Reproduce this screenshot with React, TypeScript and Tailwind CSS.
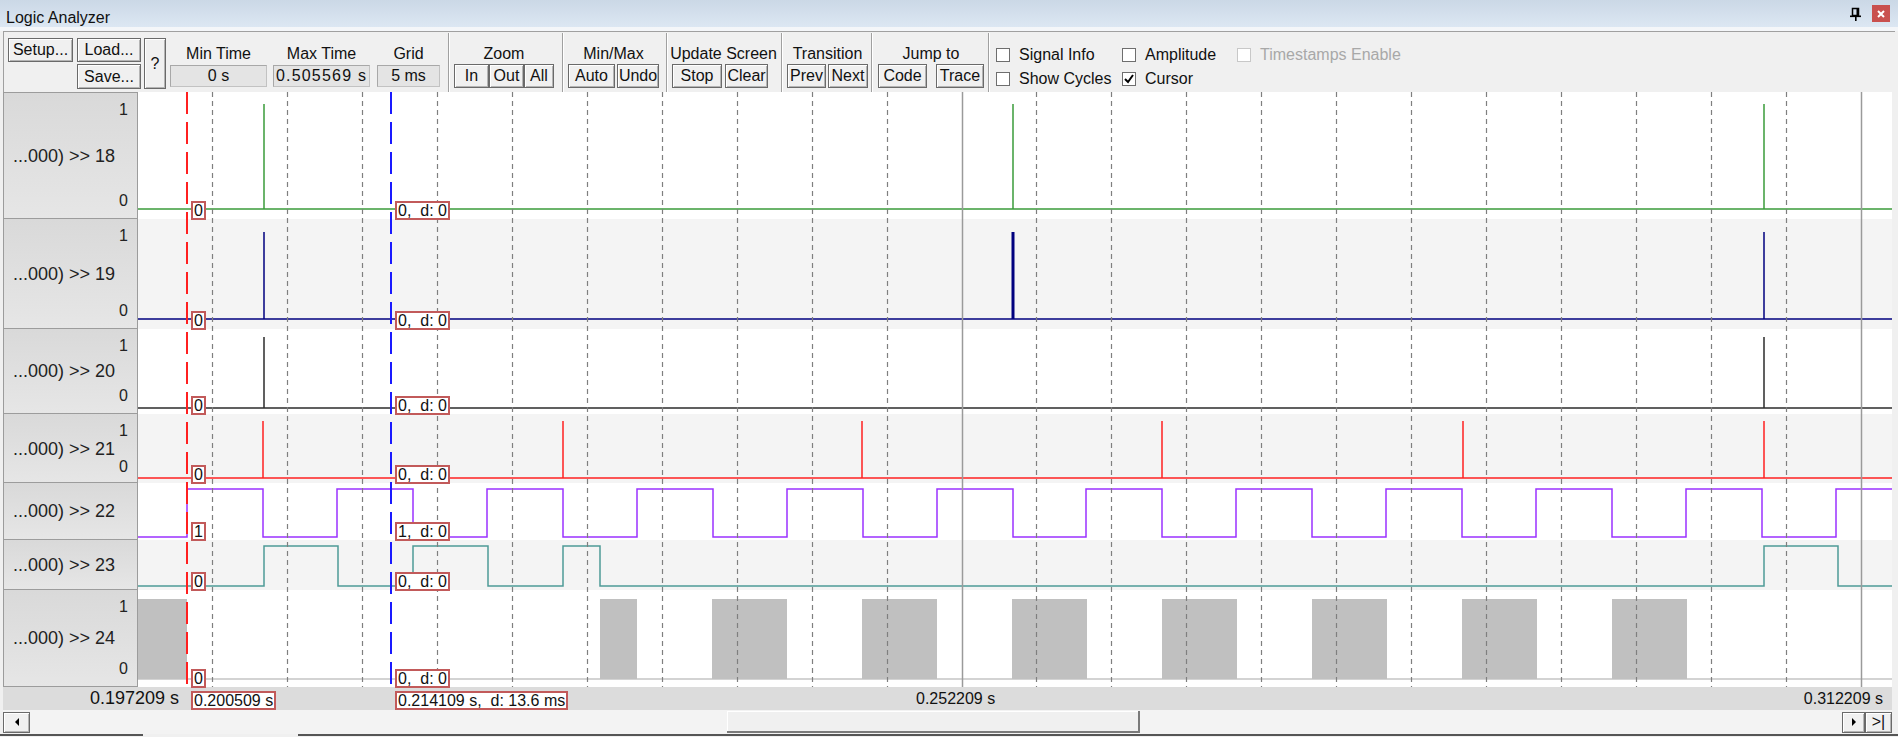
import React from "react";

// plot area is 1754px wide, x = 0 at 0.197209 s
const W = 1754;

function stepPath(start: 0 | 1, xs: number[], hi: number, lo: number) {
  let level = start;
  let d = `M0 ${level ? hi : lo}`;
  for (const x of xs) {
    level = level ? 0 : 1;
    d += ` H${x} V${level ? hi : lo}`;
  }
  return d + ` H${W}`;
}

const purpleXs: number[] = [];
for (let k = 0; k < 12; k++) {
  const r = Math.round(49 + 149.9 * k);
  const f = Math.round(125 + 149.9 * k);
  if (r < W) purpleXs.push(r);
  if (f < W) purpleXs.push(f);
}

const blocks = [
  [0, 49], [462, 499], [574, 649], [724, 799], [874, 949],
  [1024, 1099], [1174, 1249], [1324, 1399], [1474, 1549],
];

type Row = {
  name: string;
  h: number;
  stripe: boolean;
  levels: boolean;
  val: string;
  wave: React.ReactNode;
};

function spikes(xs: number[], top: number, base: number, color: string, thick?: number) {
  return (
    <>
      <line x1={0} x2={W} y1={base} y2={base} stroke={color} strokeWidth={1.5} />
      {xs.map((x) => (
        <line key={x} x1={x} x2={x} y1={top} y2={base} stroke={color} strokeWidth={x === thick ? 3 : 1.5} />
      ))}
    </>
  );
}

const rows: Row[] = [
  { name: "...000) >> 18", h: 127, stripe: false, levels: true, val: "0", wave: spikes([126, 875, 1626], 12, 117, "#3a9b3a") },
  { name: "...000) >> 19", h: 110, stripe: true, levels: true, val: "0", wave: spikes([126, 875, 1626], 13, 100, "#00007f", 875) },
  { name: "...000) >> 20", h: 85, stripe: false, levels: true, val: "0", wave: spikes([126, 1626], 8, 79, "#2b2b2b") },
  { name: "...000) >> 21", h: 69, stripe: true, levels: true, val: "0", wave: spikes([125, 425, 724, 1024, 1325, 1626], 7, 64, "#ff2020") },
  {
    name: "...000) >> 22", h: 57, stripe: false, levels: false, val: "1",
    wave: <path d={stepPath(0, purpleXs, 6, 54)} fill="none" stroke="#9a32ff" strokeWidth={1.5} />,
  },
  {
    name: "...000) >> 23", h: 50, stripe: true, levels: false, val: "0",
    wave: <path d={stepPath(0, [126, 200, 275, 350, 425, 462, 1626, 1700], 6, 46)} fill="none" stroke="#4e9a97" strokeWidth={1.5} />,
  },
  {
    name: "...000) >> 24", h: 97, stripe: false, levels: true, val: "0",
    wave: (
      <>
        <line x1={0} x2={W} y1={89} y2={89} stroke="#c4c4c4" strokeWidth={1.5} />
        {blocks.map(([a, b]) => (
          <rect key={a} x={a} y={9} width={b - a} height={80} fill="#c0c0c0" />
        ))}
      </>
    ),
  },
];

function Btn({ children, className = "" }: { children: React.ReactNode; className?: string }) {
  return (
    <button className={`flex items-center justify-center border border-[#6a6a6a] bg-[#f0f0f0] shadow-[inset_1px_1px_0_#ffffff,inset_-1px_-1px_0_#b4b4b4] text-[16px] leading-none text-[#111] ${className}`}>
      {children}
    </button>
  );
}

function Field({ label, value, w, ml, wide }: { label: string; value: string; w: string; ml: string; wide?: boolean }) {
  return (
    <div className={`flex flex-col ${w} ${ml}`}>
      <div className="h-[27px] pt-[7px] text-center leading-[18px]">{label}</div>
      <div className={`h-[22px] flex items-center justify-center bg-[#e4e4e4] border border-[#c2c2c2] border-t-[#a8a8a8] border-l-[#a8a8a8] ${wide ? "tracking-[1.2px]" : ""}`}>{value}</div>
    </div>
  );
}

function Sep({ ml }: { ml: string }) {
  return <div className={`${ml} w-[2px] -mt-[5px] self-stretch border-l border-[#a0a0a0] border-r border-r-white`} />;
}

function Group({ label, ml, w, children }: { label: string; ml: string; w: string; children: React.ReactNode }) {
  return (
    <div className={`flex flex-col ${ml} ${w}`}>
      <div className="h-[26px] pt-[7px] text-center leading-[18px] whitespace-nowrap">{label}</div>
      <div className="flex h-[24px]">{children}</div>
    </div>
  );
}

function Check({ label, checked, disabled }: { label: string; checked?: boolean; disabled?: boolean }) {
  return (
    <div className={`flex items-center h-[24px] gap-[9px] ${disabled ? "text-[#a8a8a8]" : "text-[#111]"}`}>
      <div className={`w-[14px] h-[14px] bg-white border flex items-center justify-center ${disabled ? "border-[#c8c8c8]" : "border-[#6e6e6e]"}`}>
        {checked && (
          <svg width="10" height="10" viewBox="0 0 10 10">
            <path d="M1 5 L4 8 L9 1" fill="none" stroke="#000" strokeWidth="2" />
          </svg>
        )}
      </div>
      <span className="leading-[18px] whitespace-nowrap">{label}</span>
    </div>
  );
}

function ValBox({ text, left }: { text: string; left: string }) {
  return (
    <div className={`absolute ${left} z-10 h-[19px] border-2 border-[#c25a5a] bg-white px-[1px] text-[16px] leading-[15px] whitespace-pre text-[#111]`}>
      {text}
    </div>
  );
}

export default function App() {
  const grid = Array.from({ length: 23 }, (_, k) => Math.round(74 + 74.95 * k) + 0.5);

  return (
    <div className="w-[1898px] h-[737px] overflow-hidden bg-[#f0f0f0] font-['Liberation_Sans',Arial,sans-serif] text-[16px] text-[#111]">
      {/* title bar */}
      <div className="h-[27px] flex items-center pl-[6px] pr-[8px] bg-linear-to-b from-[#cbd8e6] to-[#dce7f3]">
        <span className="leading-none pt-[9px]">Logic Analyzer</span>
        <div className="flex-1" />
        <svg width="12" height="14" viewBox="0 0 12 14" className="mr-[10px]">
          <rect x="2.5" y="1.5" width="6" height="7" fill="none" stroke="#000" strokeWidth="1.5" />
          <rect x="6.5" y="1" width="2.5" height="8" fill="#000" />
          <rect x="0" y="8.5" width="11" height="1.6" fill="#000" />
          <rect x="5" y="9" width="1.6" height="5" fill="#000" />
        </svg>
        <div className="w-[18px] h-[17px] bg-[#c9504e] flex items-center justify-center">
          <svg width="8" height="8" viewBox="0 0 8 8">
            <path d="M1 1 L7 7 M7 1 L1 7" stroke="#fff" strokeWidth="2" />
          </svg>
        </div>
      </div>
      <div className="h-[4px] bg-[#f4f6f9]" />

      {/* toolbar */}
      <div className="ml-[3px] mr-[3px] h-[61px] flex items-start border-t border-l border-[#a0a0a0] bg-[#f0f0f0] pl-[4px] pt-[6px] whitespace-nowrap">
        <Btn className="w-[65px] h-[24px]">Setup...</Btn>
        <div className="ml-[4px] flex flex-col gap-[2px]">
          <Btn className="w-[64px] h-[24px]">Load...</Btn>
          <Btn className="w-[64px] h-[25px]">Save...</Btn>
        </div>
        <Btn className="ml-[3px] w-[22px] h-[51px]">?</Btn>
        <Field label="Min Time" value="0 s" w="w-[97px]" ml="ml-[4px]" />
        <Field label="Max Time" value="0.505569 s" w="w-[97px]" ml="ml-[6px]" wide />
        <Field label="Grid" value="5 ms" w="w-[63px]" ml="ml-[7px]" />
        <Sep ml="ml-[8px]" />
        <Group label="Zoom" ml="ml-[4px]" w="w-[100px]">
          <Btn className="w-[35px] h-[24px]">In</Btn>
          <Btn className="w-[35px] h-[24px]">Out</Btn>
          <Btn className="w-[30px] h-[24px]">All</Btn>
        </Group>
        <Sep ml="ml-[8px]" />
        <Group label="Min/Max" ml="ml-[4px]" w="w-[91px]">
          <Btn className="w-[47px] h-[24px]">Auto</Btn>
          <Btn className="ml-[2px] w-[42px] h-[24px]">Undo</Btn>
        </Group>
        <Sep ml="ml-[7px]" />
        <Group label="Update Screen" ml="ml-[2px]" w="w-[107px]">
          <Btn className="ml-[2px] w-[50px] h-[24px]">Stop</Btn>
          <Btn className="ml-[3px] w-[43px] h-[24px]">Clear</Btn>
        </Group>
        <Sep ml="ml-[4px]" />
        <Group label="Transition" ml="ml-[4px]" w="w-[81px]">
          <Btn className="w-[39px] h-[24px]">Prev</Btn>
          <Btn className="ml-[2px] w-[40px] h-[24px]">Next</Btn>
        </Group>
        <Sep ml="ml-[3px]" />
        <Group label="Jump to" ml="ml-[5px]" w="w-[106px]">
          <Btn className="w-[49px] h-[24px]">Code</Btn>
          <Btn className="ml-[9px] w-[48px] h-[24px]">Trace</Btn>
        </Group>
        <Sep ml="ml-[4px]" />
        <div className="ml-[6px] pt-[5px] grid grid-cols-[126px_115px_auto]">
          <Check label="Signal Info" />
          <Check label="Amplitude" />
          <Check label="Timestamps Enable" disabled />
          <Check label="Show Cycles" />
          <Check label="Cursor" checked />
        </div>
      </div>

      {/* signal rows */}
      <div className="relative pl-[3px] pr-[6px]">
        {rows.map((r, i) => (
          <div key={r.name} className="flex" style={{ height: r.h }}>
            <div className={`w-[135px] shrink-0 flex flex-col justify-between py-[8px] pl-[9px] pr-[9px] border-x border-b border-[#9c9c9c] bg-linear-to-b from-[#d9d9d9] to-[#e6e6e6] text-[#222] leading-[18px] ${i === 0 ? "border-t" : ""}`}>
              {r.levels ? <div className="text-right">1</div> : <div />}
              <div className="text-[18px] whitespace-nowrap">{r.name}</div>
              {r.levels ? <div className="text-right">0</div> : <div />}
            </div>
            <div className={`relative w-[1754px] ${r.stripe ? "bg-[#f4f4f4]" : "bg-white"}`}>
              <svg className="block" width={W} height={r.h}>
                {r.wave}
              </svg>
              <div className="absolute left-0 right-0" style={{ top: r.h - 18 }}>
                <ValBox text={r.val} left="left-[53px]" />
                <ValBox text={`${r.val},  d: 0`} left="left-[257px]" />
              </div>
            </div>
          </div>
        ))}

        {/* grid and cursors */}
        <svg className="absolute top-0 left-[138px] pointer-events-none" width={W} height={595}>
          {grid.map((x, k) =>
            k === 10 || k === 22 ? (
              <line key={k} x1={x} x2={x} y1={0} y2={595} stroke="#9a9a9a" strokeWidth={1.5} />
            ) : (
              <line key={k} x1={x} x2={x} y1={0} y2={595} stroke="#7f7f7f" strokeWidth={1.2} strokeDasharray="5 4" />
            )
          )}
          <line x1={49} x2={49} y1={0} y2={595} stroke="#ff2020" strokeWidth={2} strokeDasharray="22 8" />
          <line x1={253} x2={253} y1={0} y2={595} stroke="#1a1aff" strokeWidth={2} strokeDasharray="22 8" />
        </svg>
      </div>

      {/* time axis */}
      <div className="ml-[3px] mr-[6px] relative h-[23px] bg-[#dcdcdc] leading-[18px]">
        <span className="absolute left-[87px] top-[2px] text-[18px]">0.197209 s</span>
        <div className="absolute left-[188px] top-[4px] h-[19px] border-2 border-[#c25a5a] bg-white px-[1px] leading-[15px]">0.200509 s</div>
        <div className="absolute left-[392px] top-[4px] h-[19px] border-2 border-[#c25a5a] bg-white px-[1px] leading-[15px] whitespace-pre">0.214109 s,  d: 13.6 ms</div>
        <span className="absolute left-[913px] top-[3px]">0.252209 s</span>
        <span className="absolute right-[9px] top-[3px]">0.312209 s</span>
      </div>

      {/* scroll bar */}
      <div className="ml-[3px] mr-[6px] h-[24px] flex items-center bg-[#f3f3f3]">
        <Btn className="w-[27px] h-[21px]">
          <svg width="6" height="8" viewBox="0 0 6 8"><path d="M5 0 L1 4 L5 8 Z" fill="#000" /></svg>
        </Btn>
        <div className="w-[697px]" />
        <div className="w-[413px] h-[22px] bg-[#f0f0f0] border-r-2 border-b-2 border-[#7a7a7a] shadow-[inset_1px_1px_0_#ffffff]" />
        <div className="flex-1" />
        <Btn className="w-[23px] h-[21px]">
          <svg width="6" height="8" viewBox="0 0 6 8"><path d="M1 0 L5 4 L1 8 Z" fill="#000" /></svg>
        </Btn>
        <Btn className="w-[27px] h-[21px] text-[#1d3b8f]">&gt;|</Btn>
      </div>
      <div className="flex h-[3px]">
        <div className="w-[143px] border-t-2 border-[#555]" />
        <div className="w-[155px]" />
        <div className="flex-1 border-t-2 border-[#555]" />
      </div>
    </div>
  );
}
